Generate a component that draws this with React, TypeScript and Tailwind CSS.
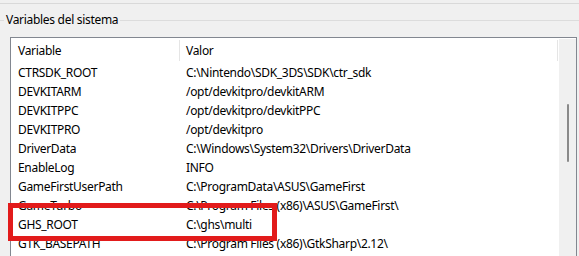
import React from 'react';

const rows: [string, string][] = [
  ['CTRSDK_ROOT', 'C:\\Nintendo\\SDK_3DS\\SDK\\ctr_sdk'],
  ['DEVKITARM', '/opt/devkitpro/devkitARM'],
  ['DEVKITPPC', '/opt/devkitpro/devkitPPC'],
  ['DEVKITPRO', '/opt/devkitpro'],
  ['DriverData', 'C:\\Windows\\System32\\Drivers\\DriverData'],
  ['EnableLog', 'INFO'],
  ['GameFirstUserPath', 'C:\\ProgramData\\ASUS\\GameFirst'],
  ['GameTurbo', 'C:\\Program Files (x86)\\ASUS\\GameFirst\\'],
  ['GHS_ROOT', 'C:\\ghs\\multi'],
  ['GTK_BASEPATH', 'C:\\Program Files (x86)\\GtkSharp\\2.12\\'],
];

export default function App() {
  return (
    <div className="relative w-[579px] h-[256px] overflow-hidden bg-[#f0f0f0] text-[12px] tracking-[-0.3px] text-black font-['Noto_Sans',sans-serif] flex flex-col">
      <div className="mt-[3px] h-px bg-[#d9d9d9]" />

      {/* group box title */}
      <div className="mt-[7px] h-[18px] flex items-center">
        <div className="w-[4px] h-px bg-[#dcdcdc]" />
        <span className="px-[2px] leading-[18px] whitespace-nowrap">Variables del sistema</span>
        <div className="flex-1 h-px bg-[#dcdcdc]" />
      </div>

      {/* list view */}
      <div className="mt-[8px] ml-[10px] mr-[2px] flex-1 flex border border-[#828790] border-b-0 bg-white">
        <div className="flex-1 flex flex-col">
          <div className="h-[25px] flex items-stretch">
            <div className="w-[169px] pl-[7px] flex items-center border-r border-[#e5e5e5] my-[2px]">Variable</div>
            <div className="flex-1 pl-[6px] flex items-center border-r border-[#e5e5e5] my-[2px]">Valor</div>
            <div className="w-[1px]" />
          </div>
          {rows.map(([name, value]) => (
            <div key={name} className="h-[19px] flex items-center whitespace-nowrap">
              <div className="w-[169px] pl-[7px]">{name}</div>
              <div className="pl-[6px]">{value}</div>
            </div>
          ))}
        </div>
        <div className="w-[17px] bg-[#f0f0f0] mt-px flex justify-center">
          <div className="mt-[65px] w-[2px] h-[58px] bg-[#8a8a8a] rounded-full" />
        </div>
      </div>

      {/* annotation */}
      <div className="absolute left-[8px] top-[203px] w-[269px] h-[38px] border-[5px] border-[#e21b1b]" />
    </div>
  );
}
